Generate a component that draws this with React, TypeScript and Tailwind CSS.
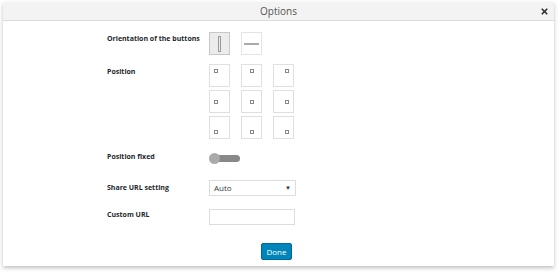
import { X } from 'lucide-react';

const positions = [
  'items-start justify-start',
  'items-start justify-center',
  'items-start justify-end',
  'items-center justify-start',
  'items-center justify-center',
  'items-center justify-end',
  'items-end justify-start',
  'items-end justify-center',
  'items-end justify-end',
];

function Label({ children, className = '' }: { children: React.ReactNode; className?: string }) {
  return (
    <div className={`w-[102px] shrink-0 whitespace-nowrap text-[7px] font-bold text-[#23282d] ${className}`}>
      {children}
    </div>
  );
}

export default function App() {
  return (
    <div className="h-[272px] w-full bg-white pl-[3px] pt-[2px] font-['Open_Sans',sans-serif]">
      <div className="flex h-[264px] w-[551px] flex-col bg-white shadow-[0_2px_4px_rgba(0,0,0,0.25)]">
        <div className="relative flex h-[19px] items-center justify-center border-b border-[#dcdcdc] bg-[#f3f3f3]">
          <span className="text-[10px] text-[#555]">Options</span>
          <X className="absolute right-[5px] top-[5px] h-[9px] w-[9px] text-[#333]" strokeWidth={4.5} />
        </div>

        <div className="flex flex-col pl-[104px] pt-[11px]">
          <div className="flex">
            <Label className="pt-[2px]">Orientation of the buttons</Label>
            <div className="flex gap-[11px]">
              <div className="flex h-[23px] w-[21px] items-center justify-center border border-[#c8c8c8] bg-[#ececec]">
                <div className="h-[16px] w-[3px] border border-[#999]" />
              </div>
              <div className="flex h-[23px] w-[21px] items-center justify-center border border-[#e4e4e4] bg-white">
                <div className="h-[2px] w-[15px] bg-[#aaa]" />
              </div>
            </div>
          </div>

          <div className="mt-[9px] flex">
            <Label className="pt-[3px]">Position</Label>
            <div className="grid grid-cols-[21px_21px_21px] gap-x-[11px] gap-y-[3px]">
              {positions.map((p) => (
                <div key={p} className={`flex h-[23px] w-[21px] border border-[#e0e0e0] px-[4px] py-[4px] ${p}`}>
                  <div className="h-[4px] w-[4px] border border-[#888]" />
                </div>
              ))}
            </div>
          </div>

          <div className="mt-[14px] flex items-center">
            <Label className="-mt-[2px]">Position fixed</Label>
            <div className="relative h-[11px] w-[31px]">
              <div className="absolute left-[3px] top-[2px] h-[7px] w-[28px] rounded-full bg-[#888]" />
              <div className="absolute left-0 top-0 h-[11px] w-[11px] rounded-full bg-[#aaa]" />
            </div>
          </div>

          <div className="mt-[16px] flex items-center">
            <Label>Share URL setting</Label>
            <div className="flex h-[16px] w-[87px] items-center justify-between border border-[#ddd] pl-[4px] pr-[4px] text-[8px] text-[#32373c]">
              <span>Auto</span>
              <span className="text-[6px]">▼</span>
            </div>
          </div>

          <div className="mt-[13px] flex items-center">
            <Label className="-mt-[3px]">Custom URL</Label>
            <div className="h-[16px] w-[86px] border border-[#ddd]" />
          </div>

          <div className="mt-[18px] flex w-[185px] justify-end">
            <div className="flex h-[17px] w-[31px] items-center justify-center rounded-[2px] border border-[#006799] bg-[#0085ba] text-[8px] text-white">
              Done
            </div>
          </div>
        </div>
      </div>
    </div>
  );
}
